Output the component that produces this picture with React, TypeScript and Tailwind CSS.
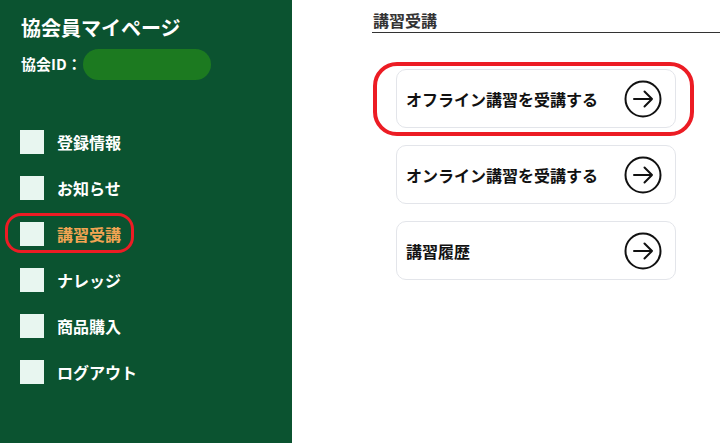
const menu = ['登録情報', 'お知らせ', '講習受講', 'ナレッジ', '商品購入', 'ログアウト'];
const cards = ['オフライン講習を受講する', 'オンライン講習を受講する', '講習履歴'];

function ArrowCircle() {
  return (
    <svg width="38" height="38" viewBox="0 0 38 38" fill="none" stroke="#111" strokeWidth={2}>
      <circle cx="19" cy="19" r="17.5" />
      <path d="M10 19h18M20.5 11.5L28 19l-7.5 7.5" strokeLinecap="round" strokeLinejoin="round" />
    </svg>
  );
}

export default function App() {
  return (
    <div className="flex w-[720px] h-[443px] overflow-hidden bg-white font-['Noto_Sans_CJK_JP','Noto_Sans',sans-serif] font-bold">
      {/* sidebar */}
      <aside className="w-[292px] shrink-0 bg-[#0b5330] pt-[14px] pl-[21px] text-white">
        <h1 className="text-[20px] leading-[28px]">協会員マイページ</h1>
        <div className="mt-[7px] flex items-center h-[31px] text-[15px]">
          <span>協会ID：</span>
          <span className="ml-px w-[128px] h-[31px] rounded-full bg-[#1c7a20]" />
        </div>
        <nav className="mt-[39px] -ml-px">
          {menu.map(m => {
            const active = m === '講習受講';
            return (
              <div key={m} className="relative flex items-center gap-[13px] h-[46px] text-[16px]">
                <span className="w-[24px] h-[24px] bg-[#e8f6f0]" />
                <span className={active ? 'text-[#f3a553]' : 'text-white'}>{m}</span>
                {active && (
                  <span className="absolute left-[-15px] top-[2px] w-[129px] h-[40px] rounded-[16px] border-[3px] border-[#ec1c24]" />
                )}
              </div>
            );
          })}
        </nav>
      </aside>

      {/* main */}
      <main className="flex-1 pl-[80px] pt-[8px]">
        <h2 className="text-[16px] leading-[24px] text-[#333] border-b border-[#333] pl-px">講習受講</h2>
        <div className="mt-[36px] ml-[24px] flex flex-col gap-[17px]">
          {cards.map((c, i) => (
            <div key={c} className="relative w-[280px] h-[59px] rounded-[10px] border border-[#e3e5ea] bg-white flex items-center justify-between pl-[9px] pr-[13px]">
              <span className="text-[16px] text-[#111]">{c}</span>
              <ArrowCircle />
              {i === 0 && (
                <span className="absolute left-[-24px] top-[-8px] w-[321px] h-[74px] rounded-[24px] border-4 border-[#ec1c24]" />
              )}
            </div>
          ))}
        </div>
      </main>
    </div>
  );
}
